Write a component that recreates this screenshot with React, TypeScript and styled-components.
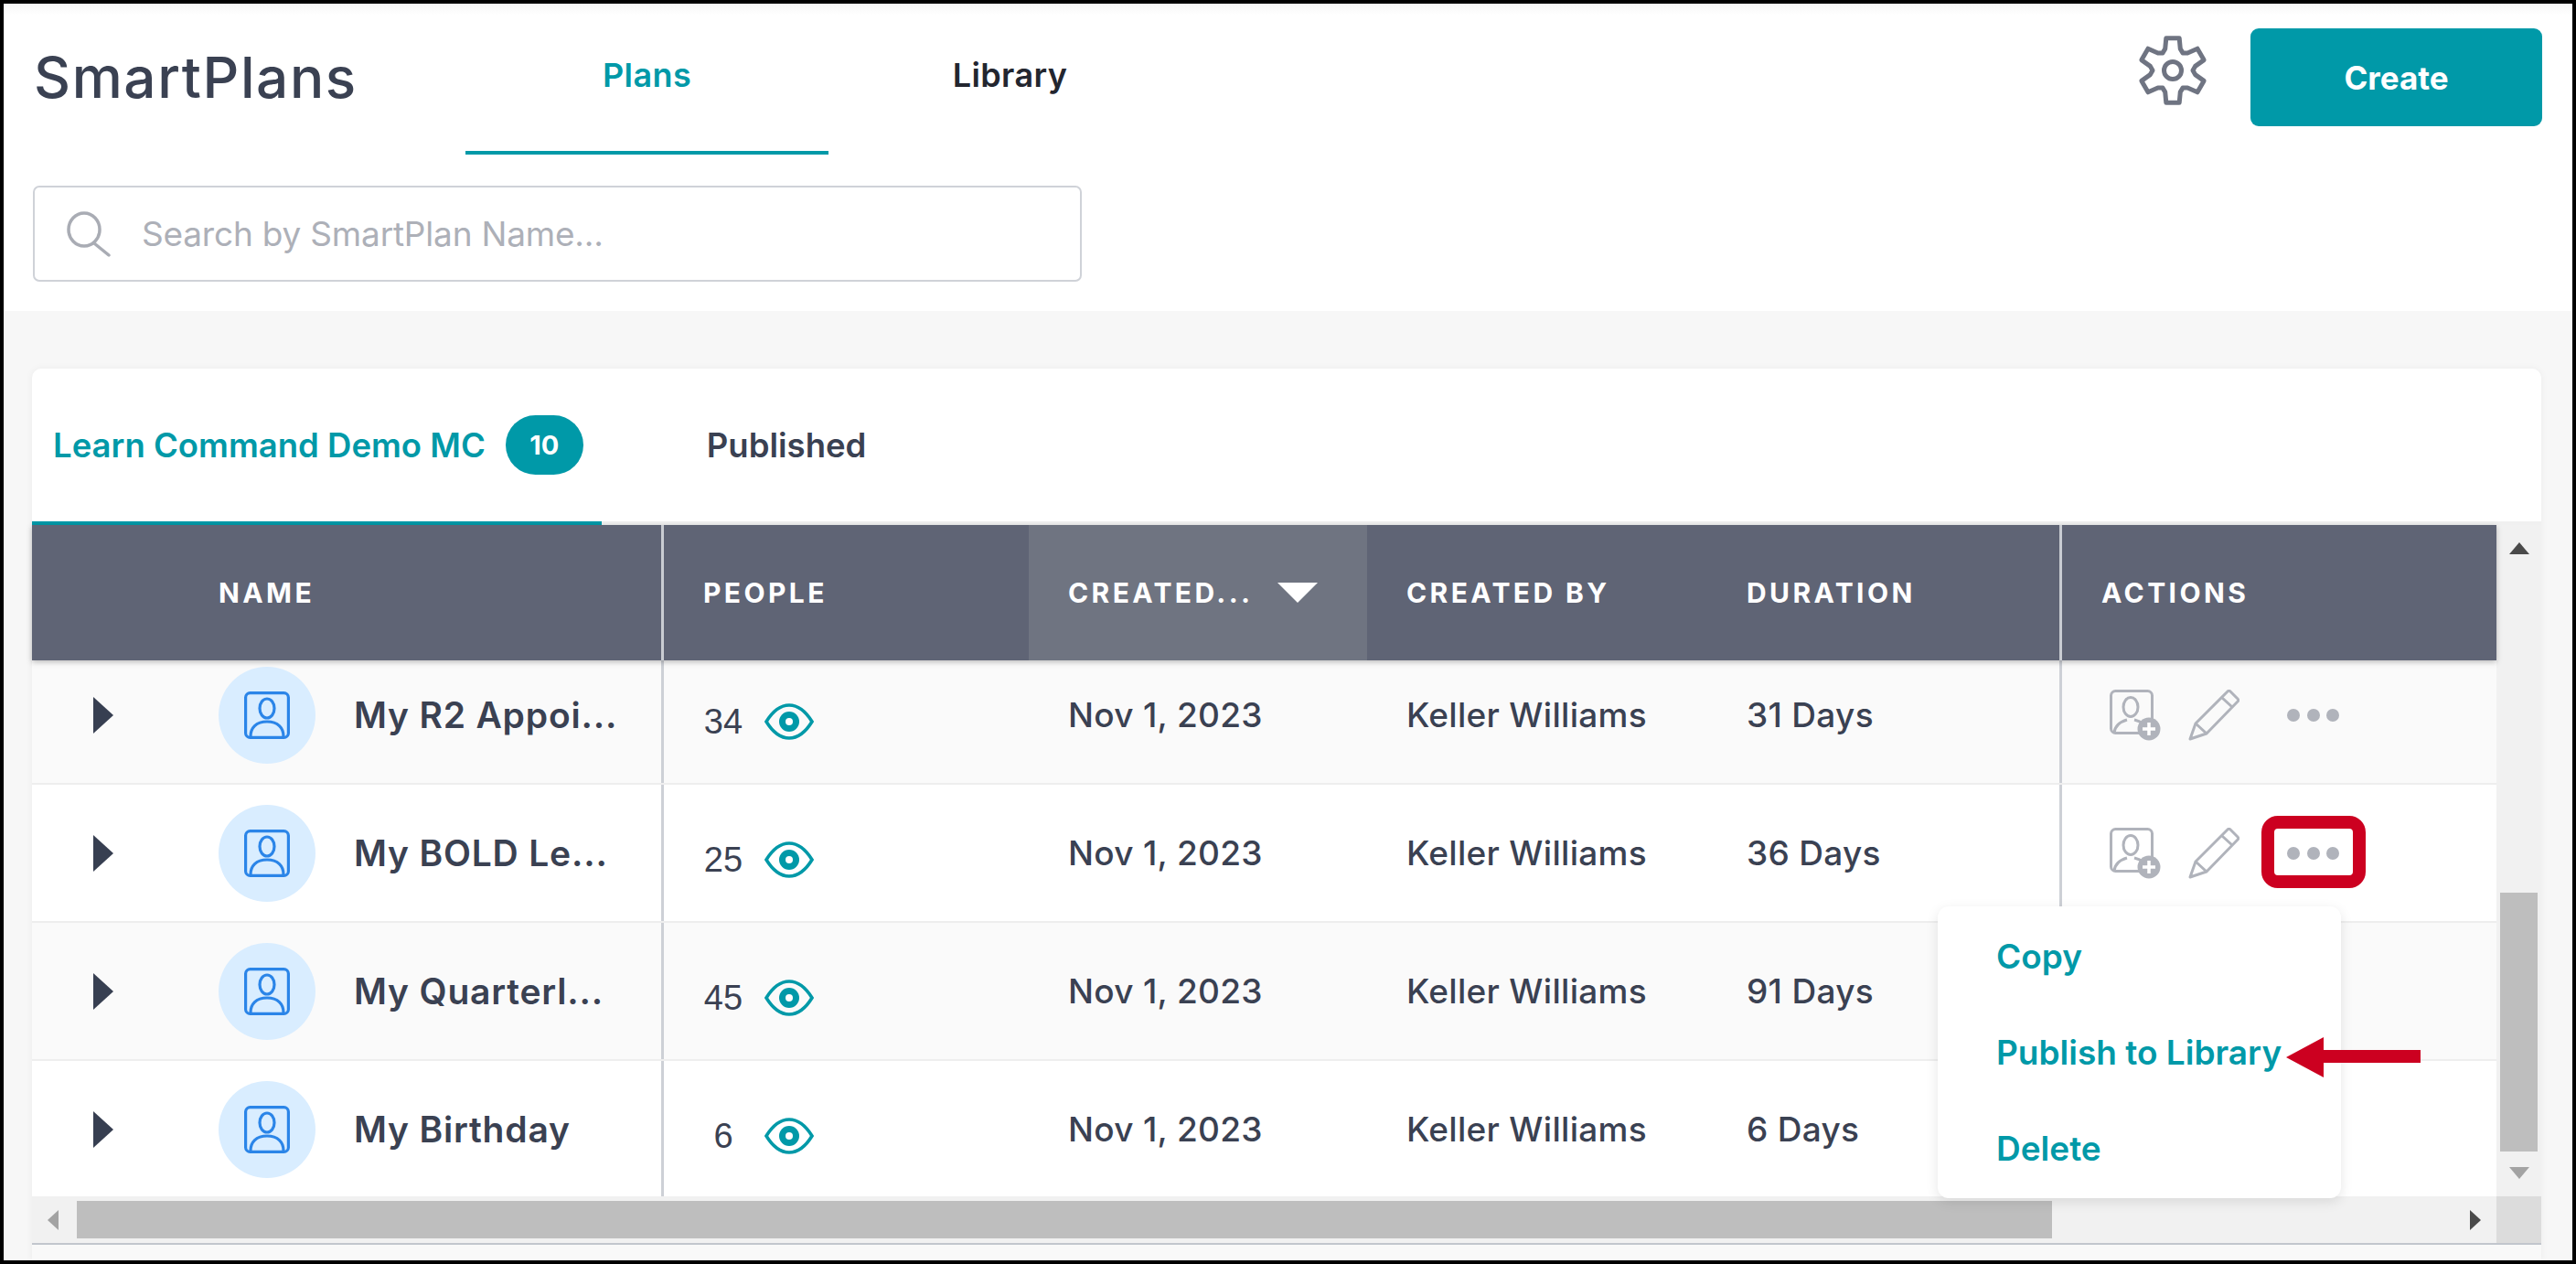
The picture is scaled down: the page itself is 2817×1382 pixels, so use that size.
import styled, { createGlobalStyle } from 'styled-components';

const TEAL = '#0099a8';
const SLATE = '#3a4152';
const RED = '#cc0020';
const ICON_GRAY = '#b0b3bb';

const GlobalStyle = createGlobalStyle`
  html, body {
    margin: 0;
    padding: 0;
    background: #fff;
  }
  * {
    box-sizing: border-box;
  }
`;

const Frame = styled.div`
  width: 2817px;
  height: 1382px;
  border: 4px solid #000;
  display: flex;
  flex-direction: column;
  overflow: hidden;
  font-family: Inter, 'Liberation Sans', sans-serif;
  color: ${SLATE};
`;

const Header = styled.header`
  height: 336px;
  flex: none;
  background: linear-gradient(#f6f6f6, #fff 12px);
`;

const TopRow = styled.div`
  height: 165px;
  display: flex;
  padding-left: 33px;
  padding-right: 33px;
`;

const Title = styled.h1`
  width: 472px;
  margin: 50px 0 0;
  font-size: 62px;
  line-height: 62px;
  font-weight: 500;
  letter-spacing: 1.6px;
  color: ${SLATE};
`;

const NavTab = styled.div<{ $active?: boolean }>`
  width: 397px;
  height: 165px;
  padding-top: 54px;
  text-align: center;
  font-size: 36px;
  line-height: 48px;
  font-weight: 600;
  letter-spacing: 0.4px;
  color: ${(p) => (p.$active ? TEAL : '#23262f')};
  border-bottom: 4px solid ${(p) => (p.$active ? TEAL : 'transparent')};
`;

const TopActions = styled.div`
  margin-left: auto;
  display: flex;
  align-items: flex-start;
  gap: 45px;
`;

const GearWrap = styled.div`
  margin-top: 32px;
  line-height: 0;
`;

const CreateButton = styled.button`
  width: 319px;
  height: 107px;
  margin-top: 27px;
  border: none;
  border-radius: 9px;
  background: ${TEAL};
  color: #fff;
  font-family: inherit;
  font-size: 35px;
  font-weight: 700;
`;

const SearchBox = styled.div`
  width: 1147px;
  height: 105px;
  margin: 34px 0 0 32px;
  padding-left: 35px;
  display: flex;
  align-items: center;
  gap: 34px;
  border: 2px solid #cfd2d8;
  border-radius: 7px;
  background: #fff;
`;

const Placeholder = styled.span`
  font-size: 37px;
  letter-spacing: -0.2px;
  color: #adb0b8;
`;

const Body = styled.main`
  flex: 1;
  min-height: 0;
  background: #f7f7f7;
  padding: 63px 34px 0 31px;
`;

const Card = styled.section`
  height: 975px;
  display: flex;
  flex-direction: column;
  background: #fff;
  border-radius: 10px 10px 0 0;
  box-shadow: 0 0 8px rgba(0, 0, 0, 0.05);
`;

const TabBar = styled.div`
  height: 171px;
  flex: none;
  display: flex;
  border-bottom: 4px solid #f0f0f0;
`;

const CardTab = styled.div<{ $active?: boolean }>`
  height: 171px;
  display: flex;
  align-items: center;
  gap: 22px;
  padding: 0 ${(p) => (p.$active ? '20px' : '0')} 0 ${(p) => (p.$active ? '23px' : '115px')};
  font-size: 36.5px;
  font-weight: 600;
  color: ${(p) => (p.$active ? TEAL : SLATE)};
  border-bottom: 4px solid ${(p) => (p.$active ? TEAL : 'transparent')};
`;

const Badge = styled.span`
  width: 85px;
  height: 65px;
  border-radius: 33px;
  display: flex;
  align-items: center;
  justify-content: center;
  background: ${TEAL};
  color: #fff;
  font-size: 29px;
  font-weight: 700;
`;

const TableArea = styled.div`
  position: relative;
  flex: none;
  height: 734px;
  display: grid;
  grid-template-columns: 2695px 49px;
  grid-template-rows: 734px;
`;

const TableMain = styled.div`
  display: flex;
  flex-direction: column;
  min-width: 0;
`;

const columns = '688px 402px 370px 372px 385px 478px';

const HeadRow = styled.div`
  position: relative;
  z-index: 1;
  height: 148px;
  flex: none;
  display: grid;
  grid-template-columns: ${columns};
  background: #5f6475;
  box-shadow: 0 2px 6px rgba(0, 0, 0, 0.25);
`;

const HeadCell = styled.div<{ $divider?: boolean; $sorted?: boolean; $inset?: number }>`
  display: flex;
  align-items: center;
  justify-content: space-between;
  padding-left: ${(p) => p.$inset ?? 43}px;
  padding-right: 54px;
  border-left: ${(p) => (p.$divider ? '3px solid #c9ccd2' : 'none')};
  background: ${(p) => (p.$sorted ? '#6f7481' : 'transparent')};
  color: #fff;
  font-size: 30px;
  font-weight: 700;
  letter-spacing: 3.4px;
  white-space: nowrap;
`;

const SortArrow = styled.span`
  flex: none;
  width: 0;
  height: 0;
  border-left: 22px solid transparent;
  border-right: 22px solid transparent;
  border-top: 22px solid #fff;
`;

const Rows = styled.div`
  height: 586px;
  flex: none;
  overflow: hidden;
`;

const Row = styled.div<{ $striped?: boolean; $first?: boolean }>`
  height: 151px;
  margin-top: ${(p) => (p.$first ? '-15px' : '0')};
  display: grid;
  grid-template-columns: ${columns};
  background: ${(p) => (p.$striped ? '#fafafa' : '#fff')};
  border-bottom: 2px solid #eeeeee;
`;

const Cell = styled.div<{ $divider?: boolean; $lower?: boolean }>`
  display: flex;
  align-items: center;
  padding-left: 43px;
  padding-top: ${(p) => (p.$lower ? '15px' : '0')};
  border-left: ${(p) => (p.$divider ? '3px solid #cdd0d6' : 'none')};
  font-size: 37px;
  font-weight: 500;
  letter-spacing: 0.3px;
  color: ${SLATE};
`;

const NameCell = styled.div`
  display: flex;
  align-items: center;
  padding-left: 67px;
`;

const Expander = styled.span`
  width: 0;
  height: 0;
  border-top: 20px solid transparent;
  border-bottom: 20px solid transparent;
  border-left: 22px solid #373f51;
  margin-right: 115px;
`;

const Avatar = styled.span`
  width: 106px;
  height: 106px;
  flex: none;
  border-radius: 50%;
  background: #d9edff;
  display: flex;
  align-items: center;
  justify-content: center;
  margin-right: 42px;
`;

const PlanName = styled.span`
  font-size: 39px;
  font-weight: 600;
  letter-spacing: 0.8px;
  white-space: nowrap;
`;

const Count = styled.span`
  width: 44px;
  margin-right: 23px;
  text-align: center;
  font-family: 'Liberation Sans', Arial, sans-serif;
  font-size: 38px;
  font-weight: 400;
  letter-spacing: 0;
`;

const ActionIcons = styled.div`
  display: flex;
  align-items: center;
  margin-left: 9px;
  gap: 30px;
`;

const DotsWrap = styled.div`
  position: relative;
  margin-left: 22px;
  display: flex;
  gap: 7.5px;
`;

const Dot = styled.span`
  width: 14px;
  height: 14px;
  border-radius: 50%;
  background: ${ICON_GRAY};
`;

const Highlight = styled.span`
  position: absolute;
  left: -28px;
  top: -34px;
  width: 114px;
  height: 79px;
  border: 14px solid ${RED};
  border-radius: 18px;
`;

const HScroll = styled.div`
  height: 51px;
  flex: none;
  display: grid;
  grid-template-columns: 2695px 49px;
`;

const HTrack = styled.div`
  background: #f1f1f1;
  display: flex;
  align-items: center;
`;

const ScrollArrow = styled.span<{ $dir: 'up' | 'down' | 'left' | 'right'; $dim?: boolean }>`
  width: 0;
  height: 0;
  flex: none;
  --c: ${(p) => (p.$dim ? '#a3a3a3' : '#4a4a4a')};
  ${(p) =>
    p.$dir === 'up' || p.$dir === 'down'
      ? `border-left: 11px solid transparent; border-right: 11px solid transparent;`
      : `border-top: 11px solid transparent; border-bottom: 11px solid transparent;`}
  ${(p) => p.$dir === 'up' && `border-bottom: 13px solid var(--c);`}
  ${(p) => p.$dir === 'down' && `border-top: 13px solid var(--c);`}
  ${(p) => p.$dir === 'left' && `border-right: 12px solid var(--c);`}
  ${(p) => p.$dir === 'right' && `border-left: 12px solid var(--c);`}
`;

const HThumb = styled.div`
  width: 2160px;
  height: 41px;
  margin-left: 20px;
  background: #bebebe;
`;

const HRightArrow = styled.div`
  margin-left: auto;
  margin-right: 17px;
  display: flex;
`;

const HLeftArrow = styled.div`
  margin-left: 17px;
  display: flex;
`;

const VScroll = styled.div`
  display: flex;
  flex-direction: column;
  align-items: center;
  background: #f1f1f1;
`;

const VArrowUp = styled.div`
  margin-top: 19px;
  display: flex;
`;

const VThumb = styled.div`
  width: 41px;
  height: 283px;
  margin-top: 370px;
  background: #bebebe;
`;

const VArrowDown = styled.div`
  margin-top: 17px;
  display: flex;
`;

const Corner = styled.div`
  background: #dcdcdc;
`;

const Footer = styled.div`
  flex: 1;
  border-top: 2px solid #c2c6cd;
  background: #f9f9f9;
`;

const Menu = styled.div`
  position: absolute;
  left: 2084px;
  top: 417px;
  width: 441px;
  height: 319px;
  z-index: 2;
  background: #fff;
  border-radius: 12px;
  box-shadow: 0 4px 14px rgba(0, 0, 0, 0.1);
  display: flex;
  flex-direction: column;
  justify-content: center;
  padding-left: 64px;
  gap: 52px;
`;

const MenuItem = styled.div`
  font-size: 37px;
  line-height: 53px;
  font-weight: 600;
  color: ${TEAL};
  white-space: nowrap;
`;

const Callout = styled.svg`
  position: absolute;
  left: 2465px;
  top: 560px;
  z-index: 3;
`;

const gearPath = (() => {
  const cx = 40;
  const cy = 41;
  const pts: string[] = [];
  for (let i = 0; i < 6; i++) {
    const a = (Math.PI / 3) * i - Math.PI / 2;
    const at = (r: number, d: number) =>
      `${(cx + r * Math.cos(a + d)).toFixed(1)} ${(cy + r * Math.sin(a + d)).toFixed(1)}`;
    pts.push(at(25, -0.34), at(36, -0.2), at(36, 0.2), at(25, 0.34));
    const mid = a + Math.PI / 6;
    pts.push(`${(cx + 22 * Math.cos(mid)).toFixed(1)} ${(cy + 22 * Math.sin(mid)).toFixed(1)}`);
  }
  return `M${pts.join('L')}Z`;
})();

const GearIcon = () => (
  <svg width="80" height="82" viewBox="0 0 80 82" fill="none" stroke="#6f7482" strokeWidth="5" strokeLinejoin="round">
    <path d={gearPath} />
    <circle cx="40" cy="41" r="9.5" />
  </svg>
);

const SearchIcon = () => (
  <svg width="48" height="50" viewBox="0 0 48 50" fill="none" stroke="#a9acb4" strokeWidth="3.5" strokeLinecap="round">
    <ellipse cx="19" cy="20" rx="17" ry="18" />
    <path d="M30 35 46 48" />
  </svg>
);

const ContactIcon = () => (
  <svg width="50" height="52" viewBox="0 0 50 52" fill="none" stroke="#2b85e8" strokeWidth="3.2" strokeLinecap="round">
    <rect x="1.6" y="1.6" width="46.8" height="48.8" rx="5" />
    <ellipse cx="25" cy="18.5" rx="8" ry="10.5" />
    <path d="M7 49c0-9 6-16 18-16s18 7 18 16" />
  </svg>
);

const EyeIcon = () => (
  <svg width="54" height="40" viewBox="0 0 54 40" fill="none">
    <path d="M2 20C10 7 19 2 27 2s17 5 25 18c-8 13-17 18-25 18S10 33 2 20Z" stroke={TEAL} strokeWidth="3.6" />
    <circle cx="27" cy="20" r="11" fill={TEAL} />
    <circle cx="27" cy="20" r="4" fill="#fff" />
  </svg>
);

const AddPersonIcon = () => (
  <svg width="56" height="56" viewBox="0 0 56 56" fill="none" stroke={ICON_GRAY} strokeWidth="3">
    <rect x="1.5" y="1.5" width="45" height="46" rx="5" />
    <ellipse cx="23" cy="19" rx="8" ry="10.5" />
    <path d="M5 47c1-8 7-12 14-14M41 42c-2-4-6-7-14-9" />
    <circle cx="43" cy="43" r="12.5" fill={ICON_GRAY} stroke="none" />
    <path d="M43 36v14M36 43h14" stroke="#fff" strokeWidth="3.5" />
  </svg>
);

const PencilIcon = () => (
  <svg width="56" height="56" viewBox="0 0 56 56" fill="none" stroke={ICON_GRAY} strokeWidth="3" strokeLinejoin="round">
    <path d="M2 54 8 37 43 2c1-1 2-1 3 0l8 8c1 1 1 2 0 3L20 48Z" />
    <path d="M37 9 48 19M8 37l12 11" />
  </svg>
);

const rows = [
  { name: 'My R2 Appoi...', people: 34, duration: '31 Days' },
  { name: 'My BOLD Le...', people: 25, duration: '36 Days', highlighted: true },
  { name: 'My Quarterl...', people: 45, duration: '91 Days' },
  { name: 'My Birthday', people: 6, duration: '6 Days' },
];

export default function App() {
  return (
    <Frame>
      <GlobalStyle />
      <Header>
        <TopRow>
          <Title>SmartPlans</Title>
          <NavTab $active>Plans</NavTab>
          <NavTab>Library</NavTab>
          <TopActions>
            <GearWrap>
              <GearIcon />
            </GearWrap>
            <CreateButton>Create</CreateButton>
          </TopActions>
        </TopRow>
        <SearchBox>
          <SearchIcon />
          <Placeholder>Search by SmartPlan Name...</Placeholder>
        </SearchBox>
      </Header>
      <Body>
        <Card>
          <TabBar>
            <CardTab $active>
              Learn Command Demo MC
              <Badge>10</Badge>
            </CardTab>
            <CardTab>Published</CardTab>
          </TabBar>
          <TableArea>
            <TableMain>
              <HeadRow>
                <HeadCell $inset={204}>NAME</HeadCell>
                <HeadCell $divider>PEOPLE</HeadCell>
                <HeadCell $sorted>
                  CREATED...
                  <SortArrow />
                </HeadCell>
                <HeadCell>CREATED BY</HeadCell>
                <HeadCell>DURATION</HeadCell>
                <HeadCell $divider>ACTIONS</HeadCell>
              </HeadRow>
              <Rows>
                {rows.map((row, i) => (
                  <Row key={row.name} $striped={i % 2 === 0} $first={i === 0}>
                    <NameCell>
                      <Expander />
                      <Avatar>
                        <ContactIcon />
                      </Avatar>
                      <PlanName>{row.name}</PlanName>
                    </NameCell>
                    <Cell $divider $lower>
                      <Count>{row.people}</Count>
                      <EyeIcon />
                    </Cell>
                    <Cell>Nov 1, 2023</Cell>
                    <Cell>Keller Williams</Cell>
                    <Cell>{row.duration}</Cell>
                    <Cell $divider>
                      {i < 2 && (
                        <ActionIcons>
                          <AddPersonIcon />
                          <PencilIcon />
                          <DotsWrap>
                            {row.highlighted && <Highlight />}
                            <Dot />
                            <Dot />
                            <Dot />
                          </DotsWrap>
                        </ActionIcons>
                      )}
                    </Cell>
                  </Row>
                ))}
              </Rows>
            </TableMain>
            <VScroll>
              <VArrowUp>
                <ScrollArrow $dir="up" />
              </VArrowUp>
              <VThumb />
              <VArrowDown>
                <ScrollArrow $dir="down" $dim />
              </VArrowDown>
            </VScroll>
            <Menu>
              <MenuItem>Copy</MenuItem>
              <MenuItem>Publish to Library</MenuItem>
              <MenuItem>Delete</MenuItem>
            </Menu>
            <Callout width="150" height="44" viewBox="0 0 150 44">
              <path d="M0 22 41 0v14h106v14H41v16Z" fill={RED} />
            </Callout>
          </TableArea>
          <HScroll>
            <HTrack>
              <HLeftArrow>
                <ScrollArrow $dir="left" $dim />
              </HLeftArrow>
              <HThumb />
              <HRightArrow>
                <ScrollArrow $dir="right" />
              </HRightArrow>
            </HTrack>
            <Corner />
          </HScroll>
          <Footer />
        </Card>
      </Body>
    </Frame>
  );
}
